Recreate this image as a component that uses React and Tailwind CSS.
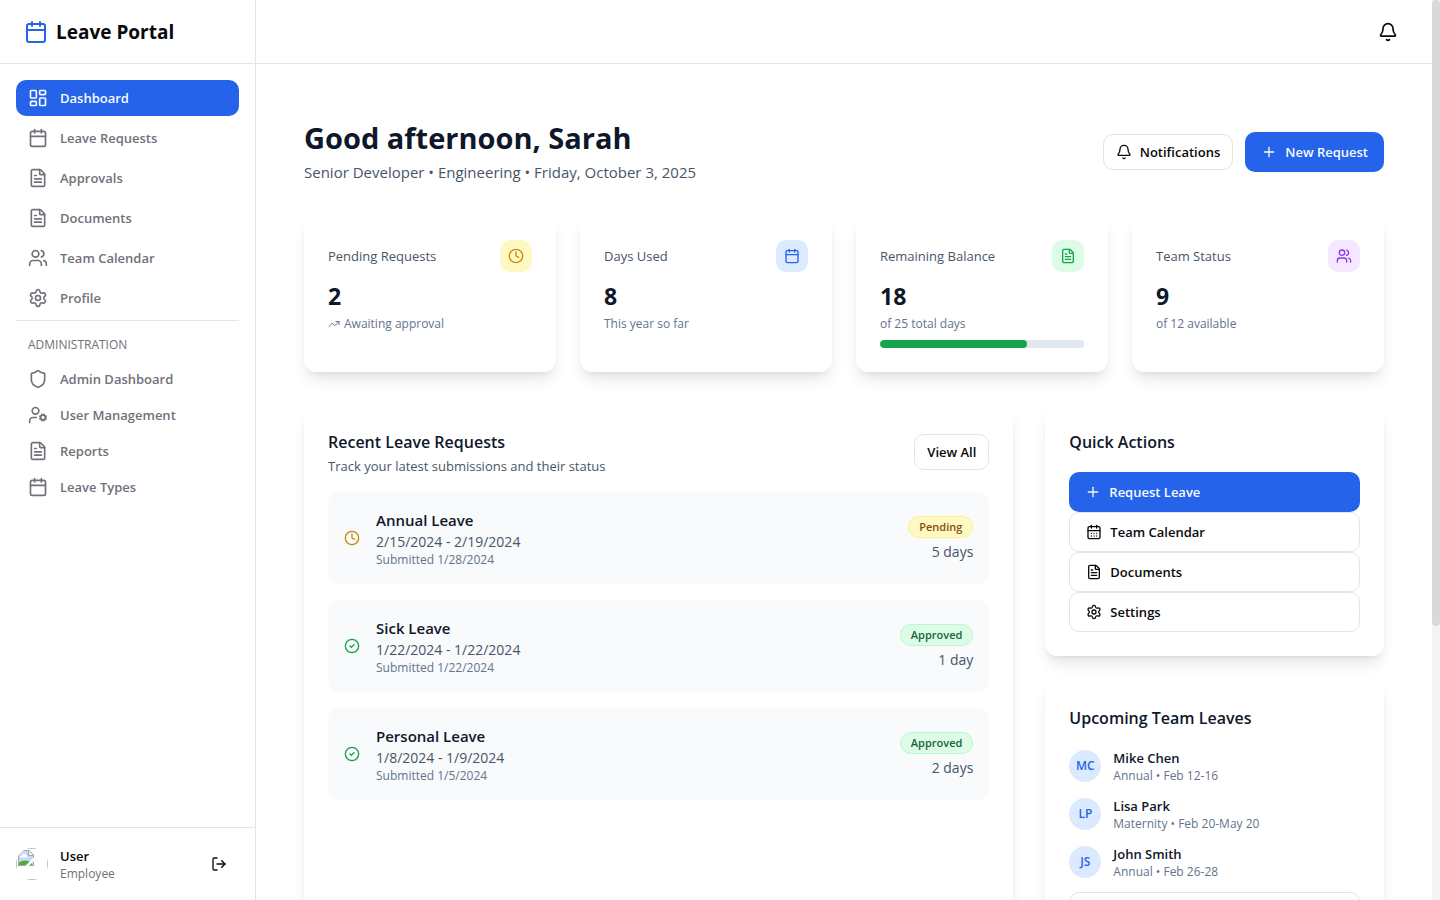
import {
  Bell,
  Calendar,
  CalendarDays,
  CircleCheck,
  Clock,
  FileText,
  LayoutDashboard,
  LogOut,
  Plus,
  Settings,
  Shield,
  TrendingUp,
  UserCog,
  Users,
} from "lucide-react";

const mainNav = [
  { label: "Dashboard", icon: LayoutDashboard, active: true },
  { label: "Leave Requests", icon: Calendar },
  { label: "Approvals", icon: FileText },
  { label: "Documents", icon: FileText },
  { label: "Team Calendar", icon: Users },
  { label: "Profile", icon: Settings },
];

const adminNav = [
  { label: "Admin Dashboard", icon: Shield },
  { label: "User Management", icon: UserCog },
  { label: "Reports", icon: FileText },
  { label: "Leave Types", icon: Calendar },
];

const stats = [
  { label: "Pending Requests", value: "2", note: "Awaiting approval", icon: Clock, tile: "bg-[#fef9c3] text-[#ca8a04]", trend: true },
  { label: "Days Used", value: "8", note: "This year so far", icon: Calendar, tile: "bg-[#dbeafe] text-[#2563eb]" },
  { label: "Remaining Balance", value: "18", note: "of 25 total days", icon: FileText, tile: "bg-[#dcfce7] text-[#16a34a]", progress: 72 },
  { label: "Team Status", value: "9", note: "of 12 available", icon: Users, tile: "bg-[#f3e8ff] text-[#9333ea]" },
];

const requests = [
  { type: "Annual Leave", dates: "2/15/2024 - 2/19/2024", submitted: "1/28/2024", status: "Pending", days: "5 days" },
  { type: "Sick Leave", dates: "1/22/2024 - 1/22/2024", submitted: "1/22/2024", status: "Approved", days: "1 day" },
  { type: "Personal Leave", dates: "1/8/2024 - 1/9/2024", submitted: "1/5/2024", status: "Approved", days: "2 days" },
];

const teamLeaves = [
  { initials: "MC", name: "Mike Chen", detail: "Annual • Feb 12-16" },
  { initials: "LP", name: "Lisa Park", detail: "Maternity • Feb 20-May 20" },
  { initials: "JS", name: "John Smith", detail: "Annual • Feb 26-28" },
];

const card = "rounded-xl bg-white shadow-lg";
const cardTitle = "text-[16px] leading-7 font-semibold text-[#0f172a]";
const outline = "flex items-center rounded-[10px] border border-[#e4e4e7] bg-white text-[13px] leading-5 font-semibold text-[#09090b]";
const solid = "flex h-10 items-center gap-2 rounded-[10px] bg-[#2563eb] px-4 text-[13px] leading-5 font-semibold text-[#f8fafc]";

function NavItem({ item }) {
  const Icon = item.icon;
  const tone = item.active ? "bg-[#2563eb] text-[#f8fafc]" : "text-[#71717a]";
  return (
    <a href="#" className={`flex h-9 items-center gap-3 rounded-[10px] px-3 text-[13px] leading-5 font-semibold ${tone}`}>
      <Icon size={20} strokeWidth={2} />
      {item.label}
    </a>
  );
}

function MissingAvatar() {
  return (
    <svg width="32" height="32" viewBox="0 0 32 32" role="img" aria-label="User avatar">
      <defs>
        <clipPath id="round">
          <circle cx="16" cy="16" r="16" />
        </clipPath>
        <clipPath id="sheet">
          <path d="M2 2h11l5 5v11H2z" />
        </clipPath>
      </defs>
      <g clipPath="url(#round)">
        <rect x="0.5" y="0.5" width="31" height="31" fill="#fff" stroke="#c0c0c0" />
        <g clipPath="url(#sheet)">
          <rect x="2" y="2" width="16" height="16" fill="#c6d9fb" />
          <path d="M4 9.500a2 2 0 0 1 2-2a2.500 2.500 0 0 1 4.500 0a1.500 1.500 0 0 1 1 2z" fill="#fff" />
          <ellipse cx="9" cy="18" rx="7.500" ry="5.500" fill="#52ab37" />
          <path d="M2.500 18V2.500h10.500l4.500 4.500v11M2 17.500h16" fill="none" stroke="#a3a6ab" />
          <path d="M12.500 2v5.500h5.500z" fill="#f2f3f5" stroke="#a3a6ab" />
          <path d="M18.500 10.500L10 19" stroke="#fff" strokeWidth="2.500" />
        </g>
      </g>
    </svg>
  );
}

function Sidebar() {
  return (
    <aside className="flex w-64 shrink-0 flex-col border-r border-[#e4e4e7] bg-white">
      <div className="flex h-16 shrink-0 items-center gap-2 border-b border-[#e4e4e7] px-6">
        <Calendar size={24} className="text-[#2563eb]" />
        <span className="text-[19px] leading-7 font-bold text-[#09090b]">Leave Portal</span>
      </div>
      <nav className="flex flex-1 flex-col p-4">
        <div className="flex flex-col gap-1">
          {mainNav.map((item) => (
            <NavItem key={item.label} item={item} />
          ))}
        </div>
        <div className="mt-1 border-t border-[#e4e4e7] pt-4">
          <h2 className="mb-2 px-3 text-[12px] leading-4 font-medium text-[#71717a] uppercase">Administration</h2>
          {adminNav.map((item) => (
            <NavItem key={item.label} item={item} />
          ))}
        </div>
      </nav>
      <div className="flex items-center gap-3 border-t border-[#e4e4e7] p-4">
        <MissingAvatar />
        <div className="flex-1">
          <p className="text-[13px] leading-5 font-semibold text-[#09090b]">User</p>
          <p className="text-[12px] leading-4 text-[#71717a]">Employee</p>
        </div>
        <button type="button" aria-label="Log out" className="flex size-10 items-center justify-center text-[#09090b]">
          <LogOut size={16} />
        </button>
      </div>
    </aside>
  );
}

function StatCard({ stat }) {
  const Icon = stat.icon;
  return (
    <section className={`${card} p-6`}>
      <div className="mb-2 flex items-center justify-between">
        <h3 className="text-[13px] leading-5 font-medium text-[#475569]">{stat.label}</h3>
        <span className={`flex size-8 items-center justify-center rounded-[10px] ${stat.tile}`}>
          <Icon size={16} />
        </span>
      </div>
      <p className="text-[23px] leading-8 font-bold text-[#0f172a]">{stat.value}</p>
      <p className="mt-1 flex items-center gap-1 text-[12px] leading-4 text-[#64748b]">
        {stat.trend && <TrendingUp size={12} />}
        {stat.note}
      </p>
      {stat.progress && (
        <div className="mt-2 h-2 overflow-hidden rounded-full bg-[#e2e8f0]">
          <div className="h-full rounded-full bg-[#16a34a]" style={{ width: `${stat.progress}%` }} />
        </div>
      )}
    </section>
  );
}

function RequestRow({ request }) {
  const pending = request.status === "Pending";
  const badge = pending
    ? "border-[#fef08a] bg-[#fef9c3] text-[#854d0e]"
    : "border-[#bbf7d0] bg-[#dcfce7] text-[#166534]";
  return (
    <li className="flex items-center gap-4 rounded-xl bg-[#f8fafc] p-4">
      {pending ? <Clock size={16} className="text-[#ca8a04]" /> : <CircleCheck size={16} className="text-[#16a34a]" />}
      <div className="flex-1">
        <h3 className="text-[15px] leading-6 font-semibold text-[#0f172a]">{request.type}</h3>
        <p className="text-[14px] leading-5 text-[#475569]">{request.dates}</p>
        <p className="text-[12px] leading-4 text-[#64748b]">Submitted {request.submitted}</p>
      </div>
      <div className="flex flex-col items-end gap-1">
        <div className="flex h-6 items-end">
          <span className={`rounded-full border px-[10px] py-[2px] text-[11px] leading-4 font-semibold ${badge}`}>{request.status}</span>
        </div>
        <p className="text-[14px] leading-5 text-[#475569]">{request.days}</p>
      </div>
    </li>
  );
}

export default function App() {
  return (
    <div className="flex h-screen overflow-hidden bg-white font-['Open_Sans',sans-serif]">
      <Sidebar />
      <div className="flex min-w-0 flex-1 flex-col">
        <header className="flex h-16 shrink-0 items-center justify-end border-b border-[#e4e4e7] px-6">
          <button type="button" aria-label="Notifications" className="flex size-10 items-center justify-center text-[#09090b]">
            <Bell size={20} />
          </button>
        </header>
        <main className="min-h-0 flex-1 overflow-hidden px-12 pt-14">
          <div className="flex items-center justify-between">
            <div>
              <h1 className="text-[29px] leading-9 font-bold text-[#0f172a]">Good afternoon, Sarah</h1>
              <p className="mt-1 text-[15px] leading-6 text-[#475569]">Senior Developer • Engineering • Friday, October 3, 2025</p>
            </div>
            <div className="flex items-center gap-3">
              <button type="button" className={`${outline} h-9 gap-2 px-3`}>
                <Bell size={16} />
                Notifications
              </button>
              <button type="button" className={solid}>
                <Plus size={16} />
                New Request
              </button>
            </div>
          </div>

          <div className="mt-8 grid grid-cols-4 gap-6">
            {stats.map((stat) => (
              <StatCard key={stat.label} stat={stat} />
            ))}
          </div>

          <div className="mt-8 grid grid-cols-3 gap-8">
            <section className={`${card} col-span-2 p-6`}>
              <div className="flex items-center justify-between">
                <div>
                  <h2 className={cardTitle}>Recent Leave Requests</h2>
                  <p className="text-[13px] leading-5 text-[#475569]">Track your latest submissions and their status</p>
                </div>
                <button type="button" className={`${outline} h-9 px-3`}>View All</button>
              </div>
              <ul className="mt-4 flex flex-col gap-4">
                {requests.map((request) => (
                  <RequestRow key={request.type} request={request} />
                ))}
              </ul>
            </section>

            <div className="flex flex-col gap-6">
              <section className={`${card} p-6`}>
                <h2 className={cardTitle}>Quick Actions</h2>
                <div className="mt-4 flex flex-col">
                  <button type="button" className={solid}>
                    <Plus size={16} />
                    Request Leave
                  </button>
                  <button type="button" className={`${outline} h-10 gap-2 px-4`}>
                    <CalendarDays size={16} />
                    Team Calendar
                  </button>
                  <button type="button" className={`${outline} h-10 gap-2 px-4`}>
                    <FileText size={16} />
                    Documents
                  </button>
                  <button type="button" className={`${outline} h-10 gap-2 px-4`}>
                    <Settings size={16} />
                    Settings
                  </button>
                </div>
              </section>

              <section className={`${card} p-6`}>
                <h2 className={cardTitle}>Upcoming Team Leaves</h2>
                <ul className="mt-4 flex flex-col gap-3">
                  {teamLeaves.map((leave) => (
                    <li key={leave.name} className="flex items-center gap-3">
                      <span className="flex size-8 items-center justify-center rounded-full bg-[#dbeafe] text-[12px] leading-4 font-semibold text-[#2563eb]">
                        {leave.initials}
                      </span>
                      <div>
                        <p className="text-[13px] leading-5 font-semibold text-[#0f172a]">{leave.name}</p>
                        <p className="text-[12px] leading-4 text-[#64748b]">{leave.detail}</p>
                      </div>
                    </li>
                  ))}
                </ul>
                <button type="button" aria-label="View team calendar" className={`${outline} mt-3 h-9 w-full justify-center px-3`} />
              </section>
            </div>
          </div>
        </main>
      </div>
      <div className="w-2 shrink-0 bg-[#f4f4f5]" aria-hidden="true">
        <div className="h-[69.5%] rounded-full bg-[#d9d9db]" />
      </div>
    </div>
  );
}
